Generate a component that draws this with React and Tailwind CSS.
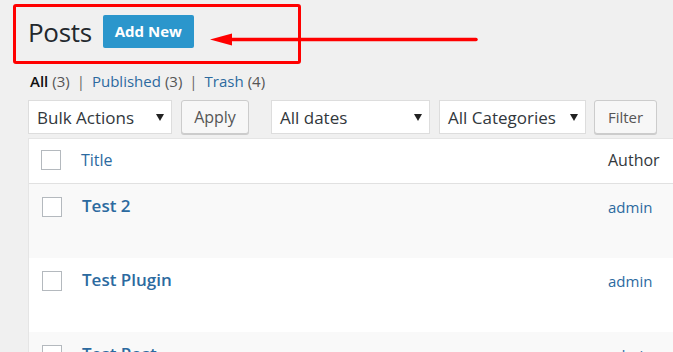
import React from "react";

const font = { fontFamily: '"Open Sans", "Noto Sans", sans-serif' };

function Caret() {
  return (
    <svg width="8" height="7" viewBox="0 0 8 7" className="shrink-0">
      <polygon points="0,0 8,0 4,7" fill="#222" />
    </svg>
  );
}

function Select({ label, w }) {
  return (
    <div
      className={`flex items-center justify-between h-[34px] bg-white border border-[#dddddd] pl-[8px] pr-[7px] text-[17px] text-[#32373c] ${w}`}
    >
      <span className="leading-none">{label}</span>
      <Caret />
    </div>
  );
}

function Button({ label, w, size }) {
  return (
    <div
      className={`flex items-center justify-center h-[34px] bg-[#f7f7f7] border border-[#cccccc] rounded-[3px] shadow-[0_1px_0_#cccccc] text-[#555555] ${w} ${size}`}
    >
      {label}
    </div>
  );
}

function Checkbox() {
  return <div className="w-[20px] h-[20px] border border-[#b4b9be] bg-white" />;
}

function Row({ title, bg }) {
  return (
    <div className={`flex h-[74px] ${bg}`}>
      <div className="w-[52px] pl-[13px] pt-[13px]">
        <Checkbox />
      </div>
      <div className="w-[527px] pl-[1px] pt-[10px] text-[17px] leading-[24px] font-semibold text-[#2c6a9f]">
        {title}
      </div>
      <div className="flex-1 pt-[11px] text-[15px] leading-[24px] text-[#2c6a9f]">admin</div>
    </div>
  );
}

export default function App() {
  return (
    <div className="relative w-[673px] h-[352px] overflow-hidden bg-[#f0f0f0]" style={font}>
      <div className="pl-[28px]">
        <div className="flex items-center h-[33px] mt-[15px]">
          <h1 className="text-[26px] leading-[33px] tracking-[-0.3px] text-[#23282d] font-normal translate-y-[1px]">
            Posts
          </h1>
          <div className="ml-[11px] w-[91px] h-[33px] flex items-center justify-center bg-[#2b96cc] rounded-[2px] text-white text-[15px] font-bold">
            Add New
          </div>
        </div>

        <div className="mt-[23px] ml-[2px] text-[15px] leading-[20px] text-[#555555] flex items-center">
          <span className="font-semibold text-[#111111]">All</span>
          <span className="ml-[4px]">(3)</span>
          <span className="mx-[7px] text-[#666666]">|</span>
          <span className="text-[#2c6a9f]">Published</span>
          <span className="ml-[4px]">(3)</span>
          <span className="mx-[7px] text-[#666666]">|</span>
          <span className="text-[#2c6a9f]">Trash</span>
          <span className="ml-[4px]">(4)</span>
        </div>

        <div className="flex items-center mt-[9px]">
          <Select label="Bulk Actions" w="w-[144px]" />
          <div className="ml-[9px]">
            <Button label="Apply" w="w-[68px]" size="text-[16px]" />
          </div>
          <div className="ml-[22px]">
            <Select label="All dates" w="w-[159px]" />
          </div>
          <div className="ml-[9px]">
            <Select label="All Categories" w="w-[147px]" />
          </div>
          <div className="ml-[8px]">
            <Button label="Filter" w="w-[63px]" size="text-[15px]" />
          </div>
        </div>

        <div className="mt-[4px] w-[720px] bg-white border-t border-l border-[#e5e5e5]">
          <div className="flex h-[45px] border-b border-[#e1e1e1]">
            <div className="w-[52px] pl-[12px] pt-[11px]">
              <Checkbox />
            </div>
            <div className="w-[527px] pt-[9px] text-[16px] leading-[24px] text-[#2c6a9f]">Title</div>
            <div className="flex-1 pt-[9px] text-[16px] leading-[24px] text-[#32373c]">Author</div>
          </div>
          <Row title="Test 2" bg="bg-[#f9f9f9]" />
          <Row title="Test Plugin" bg="bg-white" />
          <Row title="Test Post" bg="bg-[#f9f9f9]" />
        </div>
      </div>

      <div className="absolute left-[13px] top-[4px] w-[288px] h-[60px] border-[3px] border-[#ff0000] rounded-[3px]" />
      <svg className="absolute left-0 top-0" width="673" height="80" viewBox="0 0 673 80">
        <line x1="228" y1="39.5" x2="476" y2="39.5" stroke="#ff0000" strokeWidth="3.5" strokeLinecap="round" />
        <polygon points="210,39.5 232,33.5 232,45.5" fill="#ff0000" />
      </svg>
    </div>
  );
}
